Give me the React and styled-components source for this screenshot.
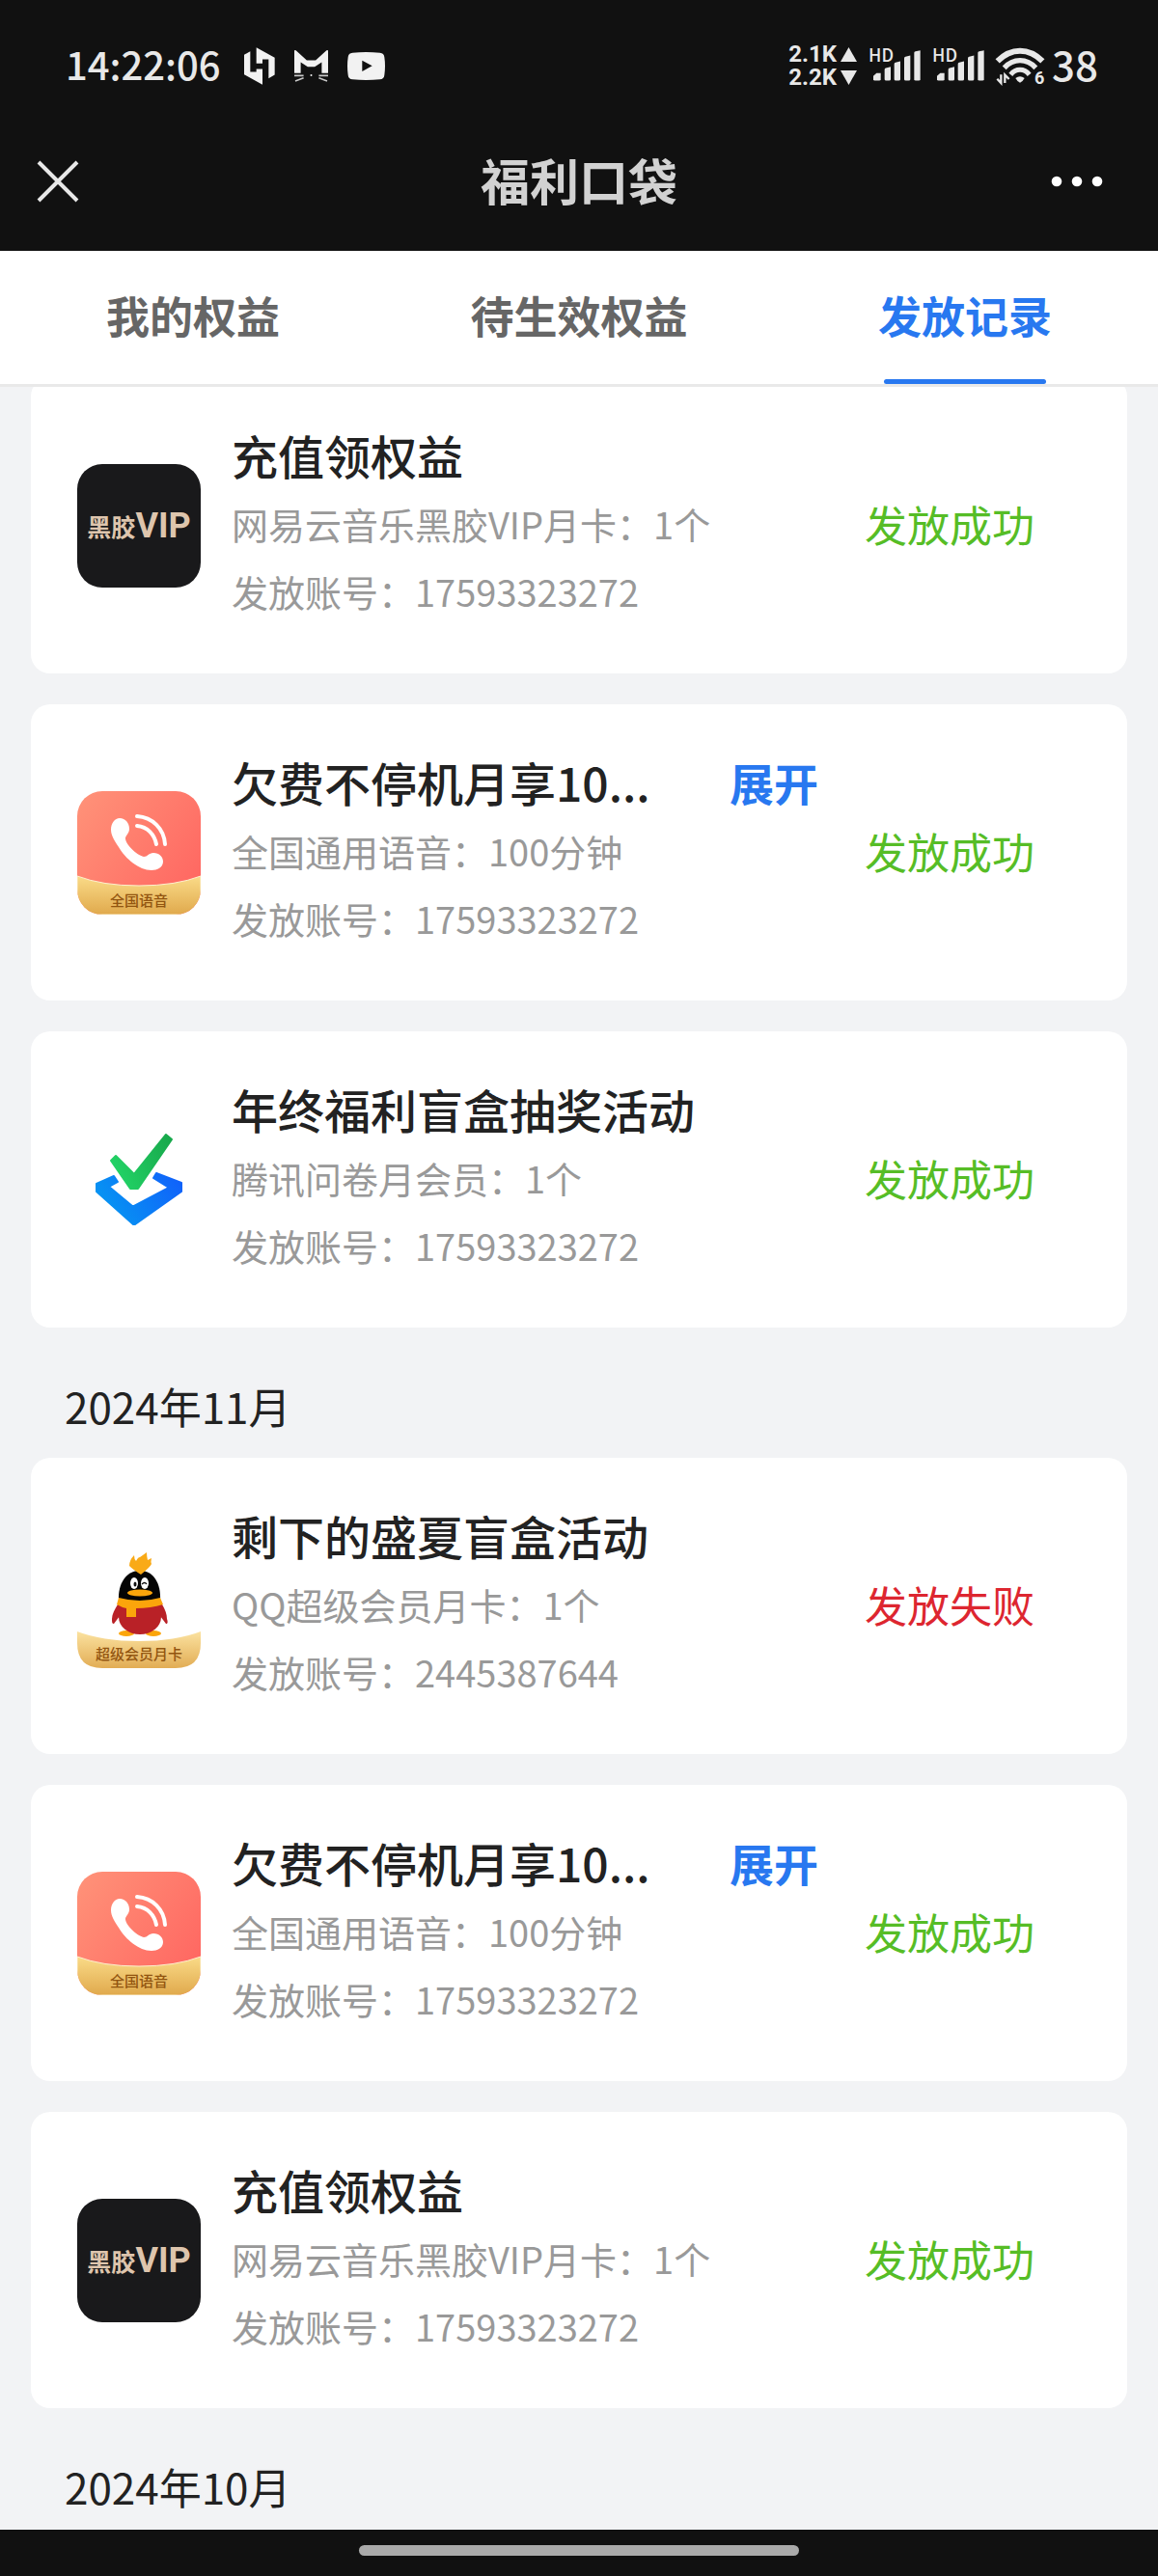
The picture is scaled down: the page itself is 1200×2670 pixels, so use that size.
import { useLayoutEffect, useRef } from 'react';
import styled, { createGlobalStyle } from 'styled-components';

const SANS = "'Noto Sans CJK SC', 'Noto Sans', sans-serif";

const GlobalStyle = createGlobalStyle`
    * {
        box-sizing: border-box;
    }

    body {
        margin: 0;
        background: #f2f3f5;
        font-family: ${SANS};
    }

    h1, h2, h3, p, ul {
        margin: 0;
        padding: 0;
        font-weight: 400;
    }

    button {
        border: 0;
        padding: 0;
        background: none;
        font-family: inherit;
        cursor: pointer;
    }

    svg {
        display: block;
        flex: none;
    }
`;

const tabs = ['我的权益', '待生效权益', '发放记录'];

const records = [
    {
        month: null,
        list: [
            {
                icon: 'vinyl',
                title: '充值领权益',
                detail: '网易云音乐黑胶VIP月卡：1个',
                account: '17593323272',
                success: true,
            },
            {
                icon: 'voice',
                title: '欠费不停机月享10...',
                more: true,
                detail: '全国通用语音：100分钟',
                account: '17593323272',
                success: true,
            },
            {
                icon: 'survey',
                title: '年终福利盲盒抽奖活动',
                detail: '腾讯问卷月会员：1个',
                account: '17593323272',
                success: true,
            },
        ],
    },
    {
        month: '2024年11月',
        list: [
            {
                icon: 'qq',
                title: '剩下的盛夏盲盒活动',
                detail: 'QQ超级会员月卡：1个',
                account: '2445387644',
                success: false,
            },
            {
                icon: 'voice',
                title: '欠费不停机月享10...',
                more: true,
                detail: '全国通用语音：100分钟',
                account: '17593323272',
                success: true,
            },
            {
                icon: 'vinyl',
                title: '充值领权益',
                detail: '网易云音乐黑胶VIP月卡：1个',
                account: '17593323272',
                success: true,
            },
        ],
    },
    { month: '2024年10月', list: [] },
];

const Page = styled.div`
    display: flex;
    flex-direction: column;
    height: 100vh;
`;

const StatusBar = styled.div`
    display: flex;
    justify-content: space-between;
    align-items: center;
    height: 116px;
    padding: 20px 62px 0 68px;
    background: #111;
    color: #e8e8e8;
`;

const StatusGroup = styled.div`
    display: flex;
    align-items: center;
    gap: ${({ $gap }) => $gap}px;
`;

const StatusText = styled.span`
    padding-bottom: 4px;
    font-size: ${({ $size }) => $size}px;
    font-weight: 500;
    line-height: 48px;
`;

const Speed = styled.div`
    display: flex;
    flex-direction: column;
`;

const SpeedRow = styled.span`
    display: flex;
    align-items: center;
    justify-content: flex-end;
    gap: 4px;
    font-family: Roboto, sans-serif;
    font-size: 24px;
    font-weight: 700;
    line-height: 24px;
`;

const Signal = styled.div`
    position: relative;
    display: flex;
    justify-content: flex-end;
    width: 54px;
`;

const SignalLabel = styled.span`
    position: absolute;
    top: -6px;
    left: 0;
    font-size: 18px;
    font-weight: 500;
    line-height: 20px;
`;

const NavBar = styled.header`
    display: grid;
    grid-template-columns: 1fr auto 1fr;
    align-items: center;
    height: 144px;
    padding: 0 38px;
    background: #111;
`;

const NavTitle = styled.h1`
    padding-bottom: 4px;
    color: #d2d2d2;
    font-size: 51px;
    font-weight: 700;
    line-height: 64px;
`;

const NavButton = styled.button`
    justify-self: ${({ $side }) => $side};
`;

const TabBar = styled.nav`
    display: grid;
    grid-template-columns: repeat(3, 1fr);
    background: #fff;
    border-bottom: 3px solid #e9e9e9;
`;

const Tab = styled.button`
    position: relative;
    height: 138px;
    padding-bottom: 6px;
    color: ${({ $active }) => ($active ? '#2878f0' : '#666')};
    font-size: 45px;
    font-weight: 700;

    &::after {
        content: '';
        display: ${({ $active }) => ($active ? 'block' : 'none')};
        position: absolute;
        bottom: 0;
        left: 50%;
        width: 168px;
        height: 5px;
        margin-left: -84px;
        border-radius: 3px;
        background: #2878f0;
    }
`;

const Scroller = styled.main`
    flex: 1;
    min-height: 0;
    padding: 32px;
    overflow-y: auto;
    scrollbar-width: none;
`;

const Month = styled.h2`
    padding: 18px 35px 22px;
    color: #222;
    font-size: 44px;
    line-height: 63px;
`;

const RecordList = styled.ul`
    display: flex;
    flex-direction: column;
    gap: 32px;
    margin-bottom: 32px;
    list-style: none;
`;

const Card = styled.li`
    display: flex;
    align-items: center;
    gap: 32px;
    min-height: 307px;
    padding: 40px 48px;
    border-radius: 20px;
    background: #fff;
`;

const VinylTile = styled.div`
    display: flex;
    flex: none;
    align-items: center;
    justify-content: center;
    width: 128px;
    height: 128px;
    border-radius: 26px;
    background: #19191b;
    color: #dec5ad;
    font-size: 25px;
    font-weight: 700;
    line-height: 36px;
`;

const VinylVip = styled.span`
    font-family: Roboto, sans-serif;
    font-size: 36px;
    font-weight: 700;
`;

const Info = styled.div`
    flex: 1;
    min-width: 0;
    padding-bottom: 8px;
`;

const TitleRow = styled.div`
    display: flex;
    justify-content: space-between;
`;

const Title = styled.h3`
    color: #222;
    font-size: 48px;
    font-weight: 500;
    line-height: 74px;
    white-space: nowrap;
`;

const Expand = styled.button`
    width: 140px;
    color: #2878f0;
    font-size: 46px;
    font-weight: 700;
    line-height: 74px;
    text-align: left;
`;

const Line = styled.p`
    color: #999;
    font-size: 38px;
    line-height: 70px;
    white-space: nowrap;
`;

const Result = styled.span`
    flex: none;
    width: 192px;
    margin-right: 32px;
    margin-left: -32px;
    padding-bottom: 4px;
    color: ${({ $success }) => ($success ? '#56bd26' : '#dd2630')};
    font-size: 44px;
    line-height: 70px;
    white-space: nowrap;
`;

const HomeBar = styled.footer`
    display: flex;
    align-items: center;
    justify-content: center;
    height: 48px;
    padding-bottom: 6px;
    background: #111;
`;

const HomePill = styled.div`
    width: 38%;
    height: 11px;
    border-radius: 6px;
    background: #aaa;
`;

const HexIcon = () => (
    <svg width="32" height="39" viewBox="0 0 96 116" fill="#f2f2f2">
        <path d="M0 23 19 12v64h19V67h19v49L0 84Z" />
        <path d="M38 0 95 32v53L76 96V37H57v13H38Z" />
    </svg>
);

const CatIcon = () => (
    <svg width="35" height="33" viewBox="0 0 106 100" fill="#f2f2f2">
        <path d="M0 2q0-3 5-1l34 31h28L101 1q5-2 5 1v70H86V38L64 52H42L20 38v34H0Z" />
        <path
            d="M0 80h29M3 97l26-10M106 80H77m26 17L77 87"
            fill="none"
            stroke="#c8c8c8"
            strokeWidth="5"
        />
        <circle cx="53" cy="79" r="3" />
    </svg>
);

const VideoIcon = () => (
    <svg width="39" height="29" viewBox="0 0 117 87">
        <path
            d="M16 2q42-4 85 0 13 1 14 14 4 27 0 55-1 13-14 14-43 4-85 0Q3 84 2 71q-4-28 0-55Q3 3 16 2Z"
            fill="#f2f2f2"
        />
        <path d="M46 26v34l31-17Z" fill="#111" />
    </svg>
);

const SignalBars = () => (
    <svg width="49" height="32" viewBox="0 0 147 95" fill="#e8e8e8">
        <path d="M0 90V80l10-9h13v19q0 4-5 4H5q-5 0-5-4Z" />
        <path d="M35 90V60q0-4 4-5l15-4v39q0 4-5 4H40q-5 0-5-4Z" />
        <path d="M65 90V43q0-4 4-5l15-4v56q0 4-5 4h-9q-5 0-5-4Z" />
        <path d="M96 90V25q0-4 4-5l15-4v74q0 4-5 4h-9q-5 0-5-4Z" />
        <path d="M127 90V8q0-4 4-5l15-3v90q0 4-5 4h-9q-5 0-5-4Z" />
    </svg>
);

const WifiIcon = () => (
    <svg
        width="51"
        height="39"
        viewBox="0 0 153 117"
        fill="none"
        stroke="#e8e8e8"
        overflow="visible"
    >
        <path d="M5 43Q37 11 75 11t70 32" strokeWidth="18" />
        <path d="M26 64Q47 41 75 41t49 23" strokeWidth="16" />
        <path d="M46 85Q58 70 75 70t29 15" strokeWidth="15" />
        <path d="M61 96q14-11 28 0-5 10-14 14-9-4-14-14Z" fill="#e8e8e8" stroke="none" />
        <path d="M16 85v26L4 98M28 111V86l13 13" strokeWidth="7" />
        <text
            x="120"
            y="115"
            fill="#e8e8e8"
            stroke="none"
            fontFamily="Roboto, sans-serif"
            fontSize="54"
            fontWeight="700"
        >
            6
        </text>
    </svg>
);

const TileText = ({ children }) => (
    <text
        x="64"
        y="119"
        fill="#925510"
        fontFamily={SANS}
        fontSize="15"
        fontWeight="500"
        textAnchor="middle"
    >
        {children}
    </text>
);

const VinylIcon = () => (
    <VinylTile>
        黑胶<VinylVip>VIP</VinylVip>
    </VinylTile>
);

const VoiceIcon = () => (
    <svg width="128" height="128" viewBox="0 0 128 128">
        <defs>
            <linearGradient id="coral" x1="0" y1="0" x2="1" y2="0.7">
                <stop offset="0" stopColor="#ff9379" />
                <stop offset="1" stopColor="#ff6862" />
            </linearGradient>
            <linearGradient id="gold" x1="0" y1="0" x2="0" y2="1">
                <stop offset="0" stopColor="#fadb88" />
                <stop offset="1" stopColor="#e0a94c" />
            </linearGradient>
            <clipPath id="tile">
                <rect width="128" height="128" rx="26" />
            </clipPath>
        </defs>
        <g clipPath="url(#tile)">
            <rect width="128" height="128" fill="url(#coral)" />
            <path d="M0 88q26 10 64 10t64-10v40H0Z" fill="url(#gold)" stroke="#fdf0cf" />
        </g>
        <path
            d="M35 40c0-7 4-12 9-12 6 0 10 5 10 11 0 4-2 5-4 9-1 6 11 18 19 20 4 0 5-4 10-4 6 0 10 4 10 9 0 6-6 9-12 9-13 0-27-12-34-24-4-6-8-12-8-18Z"
            fill="#fff"
        />
        <path
            d="M62 26c16 1 28 13 29 29M62 36c11 1 18 9 20 19"
            fill="none"
            stroke="#fff"
            strokeWidth="4"
            strokeLinecap="round"
        />
        <TileText>全国语音</TileText>
    </svg>
);

const SurveyIcon = () => (
    <svg width="128" height="128" viewBox="0 0 128 128">
        <defs>
            <linearGradient id="tick" x1="0" y1="0.6" x2="1" y2="0.2">
                <stop offset="0" stopColor="#22d366" />
                <stop offset="1" stopColor="#18a94c" />
            </linearGradient>
            <linearGradient id="box" x1="0" y1="0.6" x2="1" y2="0.2">
                <stop offset="0" stopColor="#0697f2" />
                <stop offset="1" stopColor="#1062fa" />
            </linearGradient>
        </defs>
        <g strokeWidth="2" strokeLinejoin="round">
            <path
                d="m38 60-18 8v8l38 34h2l48-34v-9L82 57l-3 5 16 10-36 19h-2L33 71l9-5Z"
                fill="url(#box)"
                stroke="url(#box)"
            />
            <path d="m40 39-5 5 20 29h8l35-51-6-5-33 41Z" fill="url(#tick)" stroke="url(#tick)" />
        </g>
    </svg>
);

const QqIcon = () => (
    <svg width="128" height="128" viewBox="0 0 128 128">
        <defs>
            <linearGradient id="ribbon" x1="0" y1="0" x2="0" y2="1">
                <stop offset="0" stopColor="#fbe2a0" />
                <stop offset="1" stopColor="#e2ad55" />
            </linearGradient>
        </defs>
        <path
            d="M0 90q26 10 64 10t64-10v12q0 26-26 26H26Q0 128 0 102Z"
            fill="url(#ribbon)"
        />
        <path d="M42 62c-3 5-6 10-6 15 0 3 0 5 2 5l6-8h42l6 8c2 0 2-2 1-5 0-5-2-10-5-15Z" fill="#b92127" />
        <ellipse cx="51" cy="92" rx="8" ry="3" fill="#fba50b" />
        <ellipse cx="79" cy="92" rx="8" ry="3" fill="#fba50b" />
        <ellipse cx="65" cy="75" rx="22" ry="18" fill="#b92127" />
        <path d="M43 58c-1-18 8-31 22-31s22 13 21 31Q65 64 43 58Z" fill="#050505" />
        <path
            d="M43 55q22 6 43 0l3 7q-13 4-28 4v9H51v-9q-5-1-10-4Z"
            fill="#fba50b"
        />
        <path
            d="M66 31q-8-5-12-9 0-6 5-11 0 4 2 6 2-4 4-4 3-2 7-5 0 4 1 8l4-2q-1 4 0 6-1 3-11 11Z"
            fill="#f9aa17"
        />
        <ellipse cx="59" cy="40" rx="4" ry="6" fill="#fff" />
        <ellipse cx="70" cy="40" rx="4" ry="6" fill="#fff" />
        <ellipse cx="60" cy="41" rx="1.5" ry="2.5" fill="#111" />
        <path d="M67 41q3-3 5 0" fill="none" stroke="#111" strokeWidth="1.3" />
        <ellipse cx="65" cy="50" rx="13" ry="3.5" fill="#fba50b" />
        <TileText>超级会员月卡</TileText>
    </svg>
);

const icons = {
    vinyl: VinylIcon,
    voice: VoiceIcon,
    survey: SurveyIcon,
    qq: QqIcon,
};

const RecordCard = ({ record }) => {
    const Icon = icons[record.icon];

    return (
        <Card>
            <Icon />
            <Info>
                <TitleRow>
                    <Title>{record.title}</Title>
                    {record.more && <Expand type="button">展开</Expand>}
                </TitleRow>
                <Line>{record.detail}</Line>
                <Line>发放账号：{record.account}</Line>
            </Info>
            <Result $success={record.success}>
                {record.success ? '发放成功' : '发放失败'}
            </Result>
        </Card>
    );
};

const App = () => {
    const scroller = useRef(null);

    // list is already scrolled a little, its first card sits under the tabs
    useLayoutEffect(() => {
        scroller.current.scrollTop = 42;
    }, []);

    return (
        <Page>
            <GlobalStyle />
            <StatusBar>
                <StatusGroup $gap={24}>
                    <StatusText $size={40}>14:22:06</StatusText>
                    <StatusGroup $gap={20}>
                        <HexIcon />
                        <CatIcon />
                        <VideoIcon />
                    </StatusGroup>
                </StatusGroup>
                <StatusGroup $gap={12}>
                    <Speed>
                        <SpeedRow>
                            2.1K
                            <svg width="17" height="15" viewBox="0 0 17 15" fill="#e8e8e8">
                                <path d="M8.5 0 17 15H0Z" />
                            </svg>
                        </SpeedRow>
                        <SpeedRow>
                            2.2K
                            <svg width="17" height="15" viewBox="0 0 17 15" fill="#e8e8e8">
                                <path d="M0 0h17L8.5 15Z" />
                            </svg>
                        </SpeedRow>
                    </Speed>
                    <Signal>
                        <SignalLabel>HD</SignalLabel>
                        <SignalBars />
                    </Signal>
                    <Signal>
                        <SignalLabel>HD</SignalLabel>
                        <SignalBars />
                    </Signal>
                    <StatusGroup $gap={7}>
                        <WifiIcon />
                        <StatusText $size={42}>38</StatusText>
                    </StatusGroup>
                </StatusGroup>
            </StatusBar>
            <NavBar>
                <NavButton type="button" $side="start" aria-label="关闭">
                    <svg width="44" height="44" viewBox="0 0 44 44" stroke="#e8e8e8" strokeWidth="4">
                        <path d="m2 2 40 40M42 2 2 42" />
                    </svg>
                </NavButton>
                <NavTitle>福利口袋</NavTitle>
                <NavButton type="button" $side="end" aria-label="更多">
                    <svg width="90" height="44" viewBox="0 0 90 44" fill="#fff">
                        <circle cx="23" cy="22" r="5.3" />
                        <circle cx="44" cy="22" r="5.3" />
                        <circle cx="65" cy="22" r="5.3" />
                    </svg>
                </NavButton>
            </NavBar>
            <TabBar>
                {tabs.map((tab, index) => (
                    <Tab key={tab} type="button" $active={index === 2}>
                        {tab}
                    </Tab>
                ))}
            </TabBar>
            <Scroller ref={scroller}>
                {records.map((group, index) => (
                    <section key={index}>
                        {group.month && <Month>{group.month}</Month>}
                        {group.list.length > 0 && (
                            <RecordList>
                                {group.list.map((record, i) => (
                                    <RecordCard key={i} record={record} />
                                ))}
                            </RecordList>
                        )}
                    </section>
                ))}
            </Scroller>
            <HomeBar>
                <HomePill />
            </HomeBar>
        </Page>
    );
};

export default App;
